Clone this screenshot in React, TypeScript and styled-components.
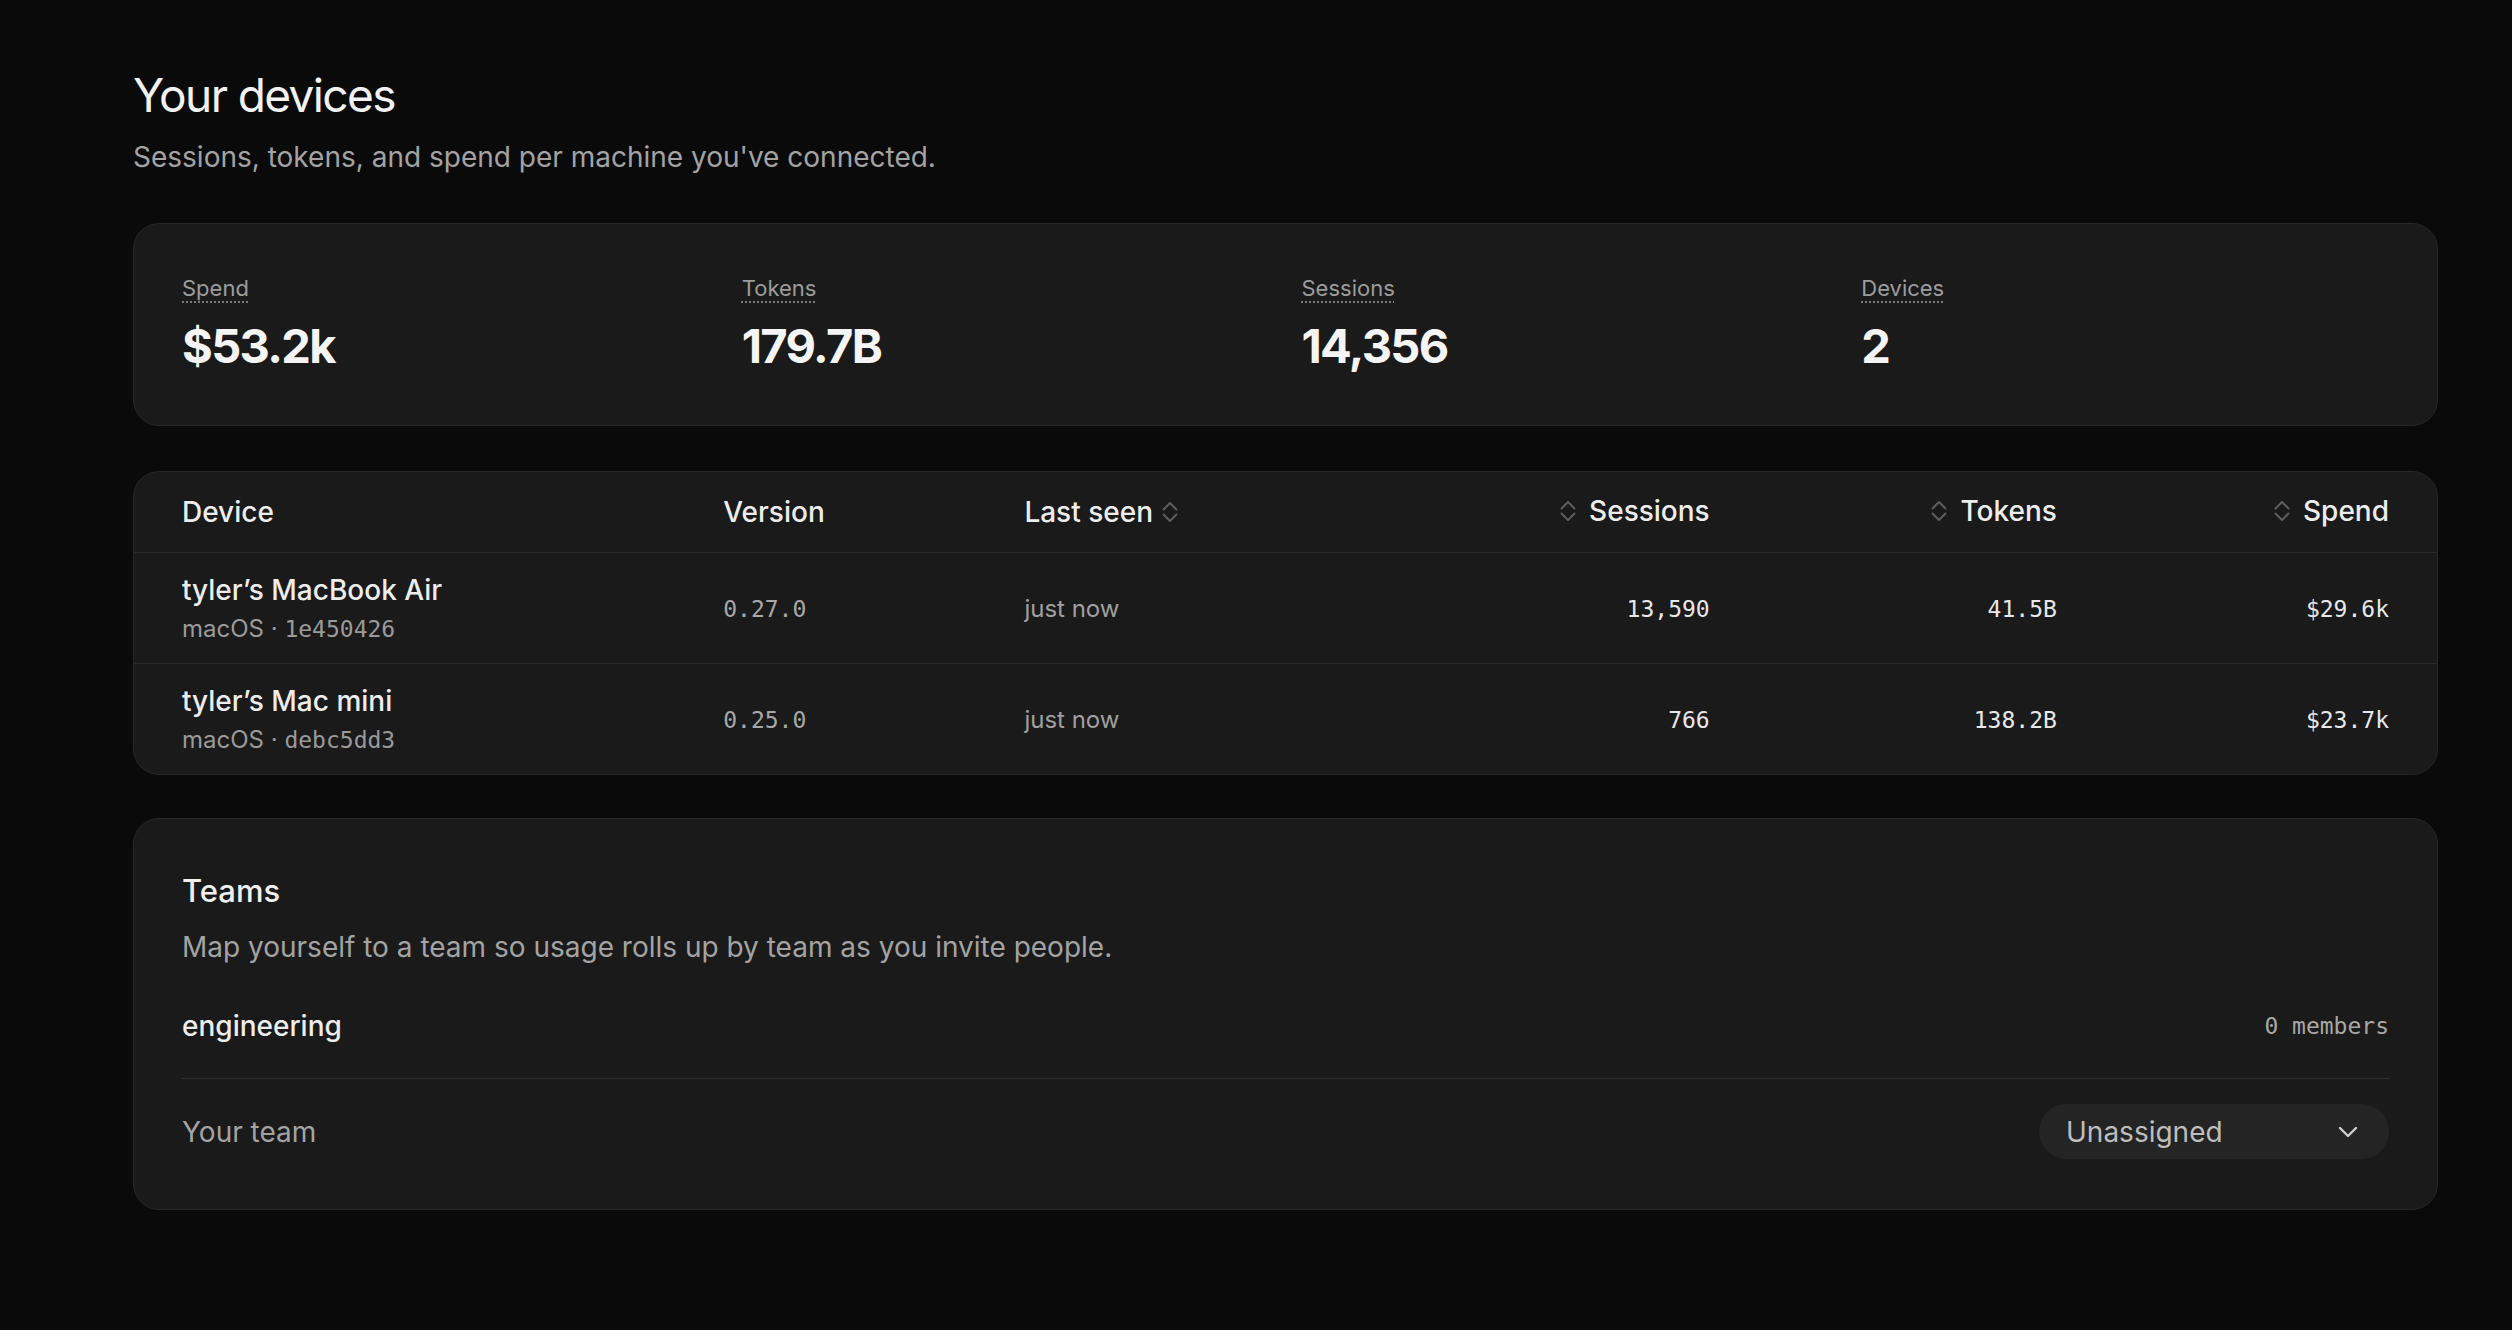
import React from "react";
import styled, { createGlobalStyle } from "styled-components";

interface Stat {
  label: string;
  value: string;
}

interface Device {
  name: string;
  os: string;
  hash: string;
  version: string;
  lastSeen: string;
  sessions: string;
  tokens: string;
  spend: string;
}

const stats: Stat[] = [
  { label: "Spend", value: "$53.2k" },
  { label: "Tokens", value: "179.7B" },
  { label: "Sessions", value: "14,356" },
  { label: "Devices", value: "2" },
];

const devices: Device[] = [
  {
    name: "tyler’s MacBook Air",
    os: "macOS",
    hash: "1e450426",
    version: "0.27.0",
    lastSeen: "just now",
    sessions: "13,590",
    tokens: "41.5B",
    spend: "$29.6k",
  },
  {
    name: "tyler’s Mac mini",
    os: "macOS",
    hash: "debc5dd3",
    version: "0.25.0",
    lastSeen: "just now",
    sessions: "766",
    tokens: "138.2B",
    spend: "$23.7k",
  },
];

// up/down chevrons shown on sortable headers
const SortIcon = () => (
  <svg width="18" height="24" viewBox="0 0 18 24" fill="none">
    <polyline
      points="2.5,9.5 9,3 15.5,9.5"
      stroke="#5e5e5e"
      strokeWidth="2"
      strokeLinecap="round"
      strokeLinejoin="round"
    />
    <polyline
      points="2.5,14.5 9,21 15.5,14.5"
      stroke="#5e5e5e"
      strokeWidth="2"
      strokeLinecap="round"
      strokeLinejoin="round"
    />
  </svg>
);

const ChevronDown = () => (
  <svg width="22" height="14" viewBox="0 0 22 14" fill="none">
    <polyline
      points="3,3 11,11 19,3"
      stroke="#cfcfcf"
      strokeWidth="2.4"
      strokeLinecap="round"
      strokeLinejoin="round"
    />
  </svg>
);

const App = () => {
  return (
    <>
      <GlobalStyle />
      <Page>
        <PageHeader>
          <Title>Your devices</Title>
          <Subtitle>Sessions, tokens, and spend per machine you've connected.</Subtitle>
        </PageHeader>

        <StatsCard>
          {stats.map((s) => (
            <StatItem key={s.label}>
              <StatLabel>{s.label}</StatLabel>
              <StatValue>{s.value}</StatValue>
            </StatItem>
          ))}
        </StatsCard>

        <TableCard>
          <HeadRow>
            <HeadCell>Device</HeadCell>
            <HeadCell>Version</HeadCell>
            <HeadCell>
              Last seen
              <SortIcon />
            </HeadCell>
            <HeadCell $right>
              <SortIcon />
              Sessions
            </HeadCell>
            <HeadCell $right>
              <SortIcon />
              Tokens
            </HeadCell>
            <HeadCell $right>
              <SortIcon />
              Spend
            </HeadCell>
          </HeadRow>
          {devices.map((d) => (
            <BodyRow key={d.hash}>
              <DeviceCell>
                <DeviceName>{d.name}</DeviceName>
                <DeviceMeta>
                  {d.os} · <Hash>{d.hash}</Hash>
                </DeviceMeta>
              </DeviceCell>
              <MonoCell $muted>{d.version}</MonoCell>
              <SeenCell>{d.lastSeen}</SeenCell>
              <MonoCell $right>{d.sessions}</MonoCell>
              <MonoCell $right>{d.tokens}</MonoCell>
              <MonoCell $right>{d.spend}</MonoCell>
            </BodyRow>
          ))}
        </TableCard>

        <TeamsCard>
          <TeamsTitle>Teams</TeamsTitle>
          <TeamsText>Map yourself to a team so usage rolls up by team as you invite people.</TeamsText>
          <TeamRow>
            <TeamName>engineering</TeamName>
            <Members>0 members</Members>
          </TeamRow>
          <AssignRow>
            <AssignLabel>Your team</AssignLabel>
            <Select>
              <span>Unassigned</span>
              <ChevronDown />
            </Select>
          </AssignRow>
        </TeamsCard>
      </Page>
    </>
  );
};

export default App;

const GlobalStyle = createGlobalStyle`
  html, body {
    margin: 0;
    padding: 0;
    background: #0a0a0a;
  }
  body {
    font-family: "Inter", "Noto Sans", sans-serif;
    color: #ededed;
    min-height: 1330px;
  }
  * {
    box-sizing: border-box;
  }
`;

const Page = styled.div`
  padding: 68px 74px 60px 133px;
  display: flex;
  flex-direction: column;
  gap: 45px;
`;

const PageHeader = styled.div`
  display: flex;
  flex-direction: column;
  gap: 14px;
  margin-bottom: 1px;
`;

const Title = styled.h1`
  margin: 0;
  font-size: 46px;
  line-height: 55px;
  font-weight: 400;
  letter-spacing: -0.035em;
  color: #f2f2f2;
`;

const Subtitle = styled.p`
  margin: 0;
  font-size: 28px;
  line-height: 40px;
  color: #a3a3a3;
`;

const Card = styled.div`
  background: #1a1a1a;
  border: 1px solid #272727;
  border-radius: 26px;
`;

const StatsCard = styled(Card)`
  display: grid;
  grid-template-columns: repeat(4, 1fr);
  gap: 32px;
  padding: 48px 48px 50px;
`;

const StatItem = styled.div`
  display: flex;
  flex-direction: column;
  align-items: flex-start;
  gap: 12px;
`;

const StatLabel = styled.span`
  font-size: 22px;
  line-height: 33px;
  color: #9c9c9c;
  text-decoration: underline dotted #7a7a7a;
  text-decoration-thickness: 2px;
  text-underline-offset: 5px;
`;

const StatValue = styled.span`
  font-size: 47px;
  line-height: 58px;
  font-weight: 650;
  letter-spacing: -0.035em;
  color: #f5f5f5;
`;

const TableCard = styled(Card)`
  overflow: hidden;
`;

const columns = "541fr 301fr 340fr 345fr 347fr 332fr";

const HeadRow = styled.div`
  display: grid;
  grid-template-columns: ${columns};
  align-items: center;
  height: 81px;
  padding: 0 48px;
  border-bottom: 1px solid #2a2a2a;
`;

const HeadCell = styled.div<{ $right?: boolean }>`
  display: flex;
  align-items: center;
  justify-content: ${(p) => (p.$right ? "flex-end" : "flex-start")};
  gap: ${(p) => (p.$right ? "12px" : "8px")};
  font-size: 28px;
  line-height: 40px;
  font-weight: 500;
  color: #ededed;
  margin-top: ${(p) => (p.$right ? "-3px" : "0")};
`;

const BodyRow = styled.div`
  display: grid;
  grid-template-columns: ${columns};
  align-items: center;
  height: 111px;
  padding: 0 48px;
  border-bottom: 1px solid #2a2a2a;

  &:last-child {
    border-bottom: none;
    height: 110px;
  }
`;

const DeviceCell = styled.div`
  display: flex;
  flex-direction: column;
  gap: 2px;
`;

const DeviceName = styled.span`
  font-size: 28px;
  line-height: 40px;
  font-weight: 500;
  color: #ededed;
`;

const DeviceMeta = styled.span`
  font-size: 24px;
  line-height: 34px;
  color: #9a9a9a;
`;

const Hash = styled.span`
  font-family: "DejaVu Sans Mono", "Liberation Mono", monospace;
  font-size: 23px;
`;

const MonoCell = styled.div<{ $right?: boolean; $muted?: boolean }>`
  font-family: "DejaVu Sans Mono", "Liberation Mono", monospace;
  font-size: 23px;
  line-height: 34px;
  text-align: ${(p) => (p.$right ? "right" : "left")};
  color: ${(p) => (p.$muted ? "#a8a8a8" : "#e8e8e8")};
  margin-top: 2px;
`;

const SeenCell = styled.div`
  font-size: 24px;
  line-height: 34px;
  color: #a0a0a0;
  margin-top: 2px;
`;

const TeamsCard = styled(Card)`
  margin-top: -2px;
  padding: 48px 48px 50px;
  display: flex;
  flex-direction: column;
`;

const TeamsTitle = styled.h2`
  margin: 0;
  font-size: 31px;
  line-height: 48px;
  font-weight: 500;
  color: #f0f0f0;
`;

const TeamsText = styled.p`
  margin: 12px 0 7px;
  font-size: 28px;
  line-height: 40px;
  color: #a3a3a3;
`;

const TeamRow = styled.div`
  display: flex;
  justify-content: space-between;
  align-items: center;
  padding: 32px 0;
  border-bottom: 1px solid #2e2e2e;
`;

const TeamName = styled.span`
  font-size: 28px;
  line-height: 40px;
  font-weight: 500;
  color: #ededed;
`;

const Members = styled.span`
  font-family: "DejaVu Sans Mono", "Liberation Mono", monospace;
  font-size: 23px;
  color: #a8a8a8;
`;

const AssignRow = styled.div`
  display: flex;
  justify-content: space-between;
  align-items: center;
  padding-top: 25px;
`;

const AssignLabel = styled.span`
  font-size: 28px;
  line-height: 40px;
  color: #a3a3a3;
`;

const Select = styled.div`
  width: 350px;
  height: 55px;
  display: flex;
  align-items: center;
  justify-content: space-between;
  padding: 0 30px 0 27px;
  border-radius: 28px;
  background: #242424;
  font-size: 28px;
  color: #bdbdbd;
`;
